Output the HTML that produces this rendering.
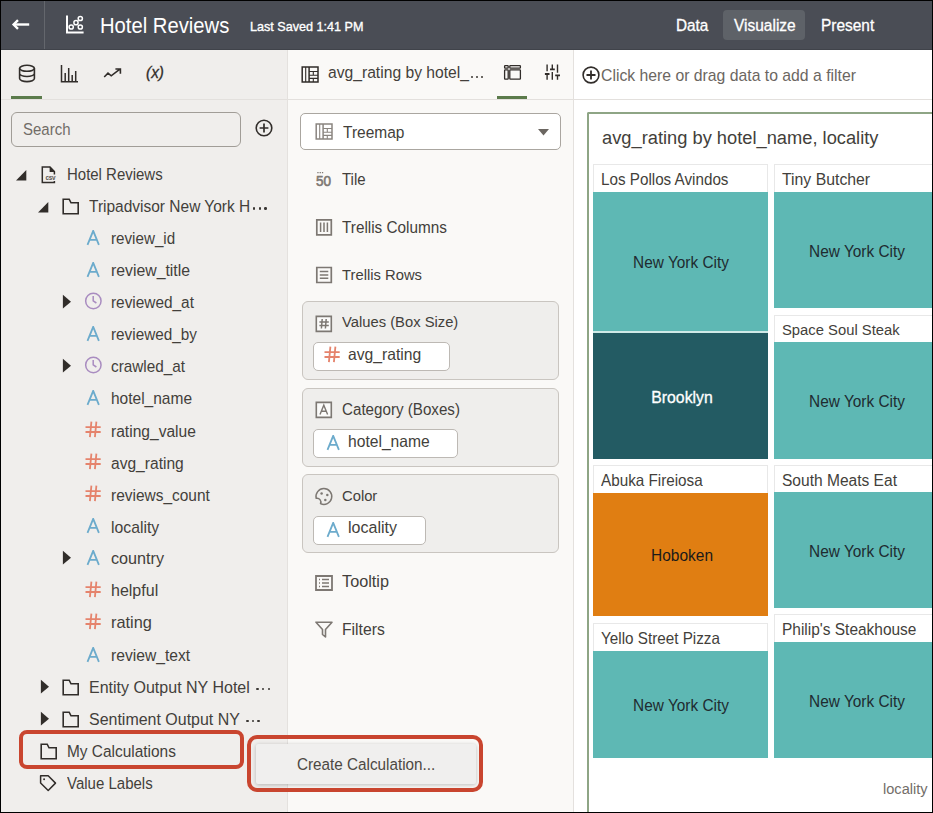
<!DOCTYPE html>
<html><head><meta charset="utf-8"><style>
html,body{margin:0;padding:0;width:933px;height:813px;overflow:hidden;background:#fff}
body{position:relative;font-family:"Liberation Sans",sans-serif}
.r{position:absolute;display:block}
.t{position:absolute;white-space:nowrap}
</style></head><body>
<div class="r" style="left:0px;top:0px;width:933px;height:813px;background:#fff"></div>
<div class="r" style="left:0px;top:0px;width:933px;height:50px;background:#4a4d55"></div>
<div class="r" style="left:0px;top:49px;width:933px;height:1px;background:#40434a"></div>
<div class="r" style="left:44px;top:1px;width:1px;height:48px;background:#64676d"></div>
<svg class="r" style="left:11px;top:18px" width="20" height="14" viewBox="0 0 20 14"><path d="M2.8 6.5 H18.2" stroke="#fff" stroke-width="2.4"/><path d="M7 2.2 L2.6 6.5 L7 10.8" stroke="#fff" stroke-width="2.4" fill="none"/></svg>
<svg class="r" style="left:64px;top:14px" width="21" height="21" viewBox="0 0 21 21"><path d="M3 1.5 V18.4 H19.6" stroke="#fff" stroke-width="2" fill="none"/><g stroke="#fff" stroke-width="1.5" fill="none"><circle cx="7.2" cy="13" r="2.1"/><circle cx="12" cy="8.7" r="2.1"/><circle cx="16.3" cy="4.5" r="2.1"/><circle cx="16.3" cy="13" r="2.1"/></g></svg>
<div class="t" style="left:99.7px;top:12.25px;font-size:21.5px;line-height:28px;color:#fff;font-weight:400;transform:scaleX(0.9410);transform-origin:0 0;">Hotel Reviews</div>
<div class="t" style="left:249.8px;top:17.96px;font-size:13.1px;line-height:17px;color:#fff;font-weight:400;-webkit-text-stroke:0.35px #fff;transform:scaleX(0.9615);transform-origin:0 0;">Last Saved 1:41 PM</div>
<div class="r" style="left:723px;top:10px;width:82px;height:30px;background:#5e6268;border-radius:4px"></div>
<div class="t" style="left:676px;top:14.97px;font-size:15.95px;line-height:21px;color:#fff;font-weight:400;-webkit-text-stroke:0.3px #fff;transform:scaleX(0.9615);transform-origin:0 0;">Data</div>
<div class="t" style="left:733.8px;top:14.91px;font-size:16.13px;line-height:21px;color:#fff;font-weight:400;-webkit-text-stroke:0.3px #fff;transform:scaleX(0.9615);transform-origin:0 0;">Visualize</div>
<div class="t" style="left:820.8px;top:14.94px;font-size:16.06px;line-height:21px;color:#fff;font-weight:400;-webkit-text-stroke:0.3px #fff;transform:scaleX(0.9615);transform-origin:0 0;">Present</div>
<div class="r" style="left:0px;top:50px;width:287px;height:763px;background:#f0eeec"></div>
<div class="r" style="left:287px;top:50px;width:1px;height:763px;background:#e4e1de"></div>
<div class="r" style="left:0px;top:99px;width:287px;height:1px;background:#e3e0dd"></div>
<div class="r" style="left:11px;top:96px;width:31px;height:3px;background:#5b7b4b"></div>
<svg class="r" style="left:18px;top:64px" width="18" height="19" viewBox="0 0 18 19"><g stroke="#312d2a" stroke-width="1.6" fill="none"><ellipse cx="9" cy="4.3" rx="7.4" ry="3"/><path d="M1.6 4.3 V14.6 A7.4 3 0 0 0 16.4 14.6 V4.3 M1.6 9.5 A7.4 3 0 0 0 16.4 9.5"/></g></svg>
<svg class="r" style="left:60px;top:65px" width="19" height="18" viewBox="0 0 19 18"><path d="M1.5 0 V16.8 H18 M5.2 16.5 V8 M8.7 16.5 V3 M12.2 16.5 V10 M15.7 16.5 V6" stroke="#312d2a" stroke-width="1.5" fill="none"/></svg>
<svg class="r" style="left:103px;top:66px" width="20" height="13" viewBox="0 0 20 13"><path d="M1.2 11 L5 7.2 L8.2 9.8 L16.6 3.4 M12.4 3 H17.4 V7.8" stroke="#312d2a" stroke-width="1.6" fill="none"/></svg>
<div class="t" style="left:145.5px;top:62.24px;font-size:16.06px;line-height:21px;color:#312d2a;font-weight:400;font-style:italic;-webkit-text-stroke:0.3px #312d2a;transform:scaleX(0.9615);transform-origin:0 0;">(x)</div>
<div class="r" style="left:11px;top:112px;width:230px;height:35px;box-sizing:border-box;border:1.3px solid #a19d97;border-radius:6px;background:#f0eeec"></div>
<div class="t" style="left:23.4px;top:120.10px;font-size:15.59px;line-height:20px;color:#716c67;font-weight:400;transform:scaleX(0.9615);transform-origin:0 0;">Search</div>
<svg class="r" style="left:255px;top:119px" width="18" height="18" viewBox="0 0 18 18"><circle cx="9" cy="9" r="7.8" stroke="#312d2a" stroke-width="1.6" fill="none"/><path d="M9 4.6 V13.4 M4.6 9 H13.4" stroke="#312d2a" stroke-width="1.7"/></svg>
<svg class="r" style="left:15.7px;top:168.9px" width="11" height="12" viewBox="0 0 11 12"><path d="M10.3 1 V11.4 H0 Z" fill="#312d2a"/></svg>
<svg class="r" style="left:40px;top:164.9px" width="18" height="19" viewBox="0 0 18 19"><path d="M14.4 9.5 V6.5 L10 2 H2.3 V17.5 H14.4 V16" stroke="#312d2a" stroke-width="1.5" fill="none"/><path d="M9.6 1.6 V6.9 H14.8 Z" fill="#312d2a"/><text x="5.6" y="14.8" font-size="6.4" font-weight="700" font-family="Liberation Sans" fill="#5a5550" letter-spacing="-0.3">csv</text></svg>
<div class="t" style="left:66.6px;top:164.50px;font-size:15.57px;line-height:20px;color:#433f3b;font-weight:400;transform:scaleX(0.9615);transform-origin:0 0;">Hotel Reviews</div>
<svg class="r" style="left:38px;top:200.99px" width="11" height="12" viewBox="0 0 11 12"><path d="M10.3 1 V11.4 H0 Z" fill="#312d2a"/></svg>
<svg class="r" style="left:62px;top:197.79000000000002px" width="18" height="17" viewBox="0 0 18 17"><path d="M1.2 1.2 H7.2 L9 4.8 H16.2 V15.7 H1.2 Z" stroke="#312d2a" stroke-width="1.6" fill="none" stroke-linejoin="miter"/></svg>
<div class="t" style="left:89.1px;top:195.91px;font-size:16.11px;line-height:21px;color:#433f3b;font-weight:400;transform:scaleX(0.9615);transform-origin:0 0;">Tripadvisor New York H</div>
<svg class="r" style="left:86px;top:229.58px" width="15" height="16" viewBox="0 0 15 16"><path d="M1.5 14.8 L7.2 0.8 L12.9 14.8 M3.8 9.9 H10.6" stroke="#6cabcc" stroke-width="1.8" fill="none"/></svg>
<div class="t" style="left:110.6px;top:228.10px;font-size:15.81px;line-height:21px;color:#433f3b;font-weight:400;transform:scaleX(0.9615);transform-origin:0 0;">review_id</div>
<svg class="r" style="left:86px;top:261.67px" width="15" height="16" viewBox="0 0 15 16"><path d="M1.5 14.8 L7.2 0.8 L12.9 14.8 M3.8 9.9 H10.6" stroke="#6cabcc" stroke-width="1.8" fill="none"/></svg>
<div class="t" style="left:110.6px;top:259.97px;font-size:16.46px;line-height:21px;color:#433f3b;font-weight:400;transform:scaleX(0.9615);transform-origin:0 0;">review_title</div>
<svg class="r" style="left:62px;top:293.76px" width="10" height="15" viewBox="0 0 10 15"><path d="M0.9 0.8 L9 7.65 L0.9 14.5 Z" fill="#312d2a"/></svg>
<svg class="r" style="left:84px;top:292.26px" width="19" height="19" viewBox="0 0 19 19"><circle cx="9.35" cy="9" r="7.7" stroke="#a98cc0" stroke-width="1.5" fill="none"/><path d="M9.2 3.9 V8.9 L12.4 11" stroke="#a98cc0" stroke-width="1.5" fill="none"/></svg>
<div class="t" style="left:110.6px;top:292.21px;font-size:16.01px;line-height:21px;color:#433f3b;font-weight:400;transform:scaleX(0.9615);transform-origin:0 0;">reviewed_at</div>
<svg class="r" style="left:86px;top:325.85px" width="15" height="16" viewBox="0 0 15 16"><path d="M1.5 14.8 L7.2 0.8 L12.9 14.8 M3.8 9.9 H10.6" stroke="#6cabcc" stroke-width="1.8" fill="none"/></svg>
<div class="t" style="left:110.6px;top:324.34px;font-size:15.91px;line-height:21px;color:#433f3b;font-weight:400;transform:scaleX(0.9615);transform-origin:0 0;">reviewed_by</div>
<svg class="r" style="left:62px;top:357.94000000000005px" width="10" height="15" viewBox="0 0 10 15"><path d="M0.9 0.8 L9 7.65 L0.9 14.5 Z" fill="#312d2a"/></svg>
<svg class="r" style="left:84px;top:356.44000000000005px" width="19" height="19" viewBox="0 0 19 19"><circle cx="9.35" cy="9" r="7.7" stroke="#a98cc0" stroke-width="1.5" fill="none"/><path d="M9.2 3.9 V8.9 L12.4 11" stroke="#a98cc0" stroke-width="1.5" fill="none"/></svg>
<div class="t" style="left:110.6px;top:356.42px;font-size:15.93px;line-height:21px;color:#433f3b;font-weight:400;transform:scaleX(0.9615);transform-origin:0 0;">crawled_at</div>
<svg class="r" style="left:86px;top:390.03000000000003px" width="15" height="16" viewBox="0 0 15 16"><path d="M1.5 14.8 L7.2 0.8 L12.9 14.8 M3.8 9.9 H10.6" stroke="#6cabcc" stroke-width="1.8" fill="none"/></svg>
<div class="t" style="left:110.6px;top:388.44px;font-size:16.14px;line-height:21px;color:#433f3b;font-weight:400;transform:scaleX(0.9615);transform-origin:0 0;">hotel_name</div>
<svg class="r" style="left:84px;top:419.62px" width="18" height="18" viewBox="0 0 18 18"><path d="M7.4 1.6 L5.9 17.1 M12.4 1.6 L10.9 17.1 M1.5 7.2 H16.7 M1.5 12 H16.7" stroke="#e5836c" stroke-width="1.8" fill="none"/></svg>
<div class="t" style="left:110.6px;top:420.50px;font-size:16.22px;line-height:21px;color:#433f3b;font-weight:400;transform:scaleX(0.9615);transform-origin:0 0;">rating_value</div>
<svg class="r" style="left:84px;top:451.71000000000004px" width="18" height="18" viewBox="0 0 18 18"><path d="M7.4 1.6 L5.9 17.1 M12.4 1.6 L10.9 17.1 M1.5 7.2 H16.7 M1.5 12 H16.7" stroke="#e5836c" stroke-width="1.8" fill="none"/></svg>
<div class="t" style="left:110.6px;top:452.59px;font-size:16.21px;line-height:21px;color:#433f3b;font-weight:400;transform:scaleX(0.9615);transform-origin:0 0;">avg_rating</div>
<svg class="r" style="left:84px;top:483.80000000000007px" width="18" height="18" viewBox="0 0 18 18"><path d="M7.4 1.6 L5.9 17.1 M12.4 1.6 L10.9 17.1 M1.5 7.2 H16.7 M1.5 12 H16.7" stroke="#e5836c" stroke-width="1.8" fill="none"/></svg>
<div class="t" style="left:110.6px;top:484.73px;font-size:16.08px;line-height:21px;color:#433f3b;font-weight:400;transform:scaleX(0.9615);transform-origin:0 0;">reviews_count</div>
<svg class="r" style="left:86px;top:518.39px" width="15" height="16" viewBox="0 0 15 16"><path d="M1.5 14.8 L7.2 0.8 L12.9 14.8 M3.8 9.9 H10.6" stroke="#6cabcc" stroke-width="1.8" fill="none"/></svg>
<div class="t" style="left:110.6px;top:516.71px;font-size:16.4px;line-height:21px;color:#433f3b;font-weight:400;transform:scaleX(0.9615);transform-origin:0 0;">locality</div>
<svg class="r" style="left:62px;top:550.48px" width="10" height="15" viewBox="0 0 10 15"><path d="M0.9 0.8 L9 7.65 L0.9 14.5 Z" fill="#312d2a"/></svg>
<svg class="r" style="left:86px;top:550.48px" width="15" height="16" viewBox="0 0 15 16"><path d="M1.5 14.8 L7.2 0.8 L12.9 14.8 M3.8 9.9 H10.6" stroke="#6cabcc" stroke-width="1.8" fill="none"/></svg>
<div class="t" style="left:110.6px;top:548.14px;font-size:16.84px;line-height:22px;color:#433f3b;font-weight:400;transform:scaleX(0.9615);transform-origin:0 0;">country</div>
<svg class="r" style="left:84px;top:580.07px" width="18" height="18" viewBox="0 0 18 18"><path d="M7.4 1.6 L5.9 17.1 M12.4 1.6 L10.9 17.1 M1.5 7.2 H16.7 M1.5 12 H16.7" stroke="#e5836c" stroke-width="1.8" fill="none"/></svg>
<div class="t" style="left:110.6px;top:580.30px;font-size:16.66px;line-height:22px;color:#433f3b;font-weight:400;transform:scaleX(0.9615);transform-origin:0 0;">helpful</div>
<svg class="r" style="left:84px;top:612.1600000000001px" width="18" height="18" viewBox="0 0 18 18"><path d="M7.4 1.6 L5.9 17.1 M12.4 1.6 L10.9 17.1 M1.5 7.2 H16.7 M1.5 12 H16.7" stroke="#e5836c" stroke-width="1.8" fill="none"/></svg>
<div class="t" style="left:110.6px;top:612.27px;font-size:17.0px;line-height:22px;color:#433f3b;font-weight:400;transform:scaleX(0.9615);transform-origin:0 0;">rating</div>
<svg class="r" style="left:86px;top:646.75px" width="15" height="16" viewBox="0 0 15 16"><path d="M1.5 14.8 L7.2 0.8 L12.9 14.8 M3.8 9.9 H10.6" stroke="#6cabcc" stroke-width="1.8" fill="none"/></svg>
<div class="t" style="left:110.6px;top:645.11px;font-size:16.27px;line-height:21px;color:#433f3b;font-weight:400;transform:scaleX(0.9615);transform-origin:0 0;">review_text</div>
<svg class="r" style="left:40px;top:678.84px" width="10" height="15" viewBox="0 0 10 15"><path d="M0.9 0.8 L9 7.65 L0.9 14.5 Z" fill="#312d2a"/></svg>
<svg class="r" style="left:62px;top:679.14px" width="18" height="17" viewBox="0 0 18 17"><path d="M1.2 1.2 H7.2 L9 4.8 H16.2 V15.7 H1.2 Z" stroke="#312d2a" stroke-width="1.6" fill="none" stroke-linejoin="miter"/></svg>
<div class="t" style="left:89.1px;top:676.56px;font-size:16.67px;line-height:22px;color:#433f3b;font-weight:400;transform:scaleX(0.9615);transform-origin:0 0;">Entity Output NY Hotel</div>
<svg class="r" style="left:40px;top:710.9300000000001px" width="10" height="15" viewBox="0 0 10 15"><path d="M0.9 0.8 L9 7.65 L0.9 14.5 Z" fill="#312d2a"/></svg>
<svg class="r" style="left:62px;top:711.23px" width="18" height="17" viewBox="0 0 18 17"><path d="M1.2 1.2 H7.2 L9 4.8 H16.2 V15.7 H1.2 Z" stroke="#312d2a" stroke-width="1.6" fill="none" stroke-linejoin="miter"/></svg>
<div class="t" style="left:89.1px;top:708.67px;font-size:16.61px;line-height:22px;color:#433f3b;font-weight:400;transform:scaleX(0.9615);transform-origin:0 0;">Sentiment Output NY</div>
<svg class="r" style="left:39.5px;top:743.32px" width="18" height="17" viewBox="0 0 18 17"><path d="M1.2 1.2 H7.2 L9 4.8 H16.2 V15.7 H1.2 Z" stroke="#312d2a" stroke-width="1.6" fill="none" stroke-linejoin="miter"/></svg>
<div class="t" style="left:66.6px;top:741.46px;font-size:16.06px;line-height:21px;color:#433f3b;font-weight:400;transform:scaleX(0.9615);transform-origin:0 0;">My Calculations</div>
<svg class="r" style="left:39px;top:773.61px" width="18" height="18" viewBox="0 0 18 18"><path d="M1.6 1.8 H9.2 L16.5 9.1 L9.2 16.5 L1.6 9 Z" stroke="#312d2a" stroke-width="1.5" fill="none" stroke-linejoin="round"/><circle cx="5.1" cy="5.3" r="0.95" fill="#312d2a"/></svg>
<div class="t" style="left:66.6px;top:774.20px;font-size:15.61px;line-height:20px;color:#433f3b;font-weight:400;transform:scaleX(0.9615);transform-origin:0 0;">Value Labels</div>
<div class="r" style="left:253.0px;top:207.22px;width:2.4px;height:2.4px;background:#3a3633;border-radius:50%"></div>
<div class="r" style="left:258.6px;top:207.22px;width:2.4px;height:2.4px;background:#3a3633;border-radius:50%"></div>
<div class="r" style="left:264.2px;top:207.22px;width:2.4px;height:2.4px;background:#3a3633;border-radius:50%"></div>
<div class="r" style="left:256.4px;top:687.52px;width:2.4px;height:2.4px;background:#3a3633;border-radius:50%"></div>
<div class="r" style="left:262.0px;top:687.52px;width:2.4px;height:2.4px;background:#3a3633;border-radius:50%"></div>
<div class="r" style="left:267.6px;top:687.52px;width:2.4px;height:2.4px;background:#3a3633;border-radius:50%"></div>
<div class="r" style="left:246.2px;top:719.54px;width:2.4px;height:2.4px;background:#3a3633;border-radius:50%"></div>
<div class="r" style="left:251.8px;top:719.54px;width:2.4px;height:2.4px;background:#3a3633;border-radius:50%"></div>
<div class="r" style="left:257.4px;top:719.54px;width:2.4px;height:2.4px;background:#3a3633;border-radius:50%"></div>
<div class="r" style="left:288px;top:50px;width:285px;height:763px;background:#faf9f7"></div>
<div class="r" style="left:573px;top:50px;width:1px;height:763px;background:#e4e1de"></div>
<div class="r" style="left:288px;top:99px;width:285px;height:1px;background:#e3e0dd"></div>
<div class="r" style="left:497px;top:96px;width:30px;height:3px;background:#5b7b4b"></div>
<svg class="r" style="left:301px;top:66px" width="18" height="17" viewBox="0 0 18 17"><path d="M1.2 1.1 H17 V16 H1.2 Z M8.1 1 V16" stroke="#312d2a" stroke-width="1.5" fill="none"/><path d="M4.7 1 V16 M8.1 5.5 H17 M8.1 9.2 H17 M8.1 12.4 H17 M12.3 5.5 V9.2 M12.3 12.4 V16" stroke="#312d2a" stroke-width="1.1" fill="none"/></svg>
<div class="t" style="left:328.2px;top:62.36px;font-size:16.29px;line-height:21px;color:#433f3b;font-weight:400;transform:scaleX(0.9615);transform-origin:0 0;">avg_rating by hotel_</div>
<div class="r" style="left:471.0px;top:75.75px;width:1.9px;height:1.9px;background:#3d3935;border-radius:50%"></div>
<div class="r" style="left:476.2px;top:75.75px;width:1.9px;height:1.9px;background:#3d3935;border-radius:50%"></div>
<div class="r" style="left:481.4px;top:75.75px;width:1.9px;height:1.9px;background:#3d3935;border-radius:50%"></div>
<svg class="r" style="left:503px;top:64px" width="19" height="17" viewBox="0 0 19 17"><g stroke="#312d2a" stroke-width="1.3" fill="none"><rect x="1.6" y="1.6" width="3.6" height="2.6" rx="0.6"/><rect x="6.8" y="1.6" width="10.6" height="2.6" rx="0.6"/><rect x="1.6" y="5.8" width="3.6" height="9.4" rx="0.6"/><rect x="6.8" y="5.8" width="10.6" height="9.4" rx="0.6"/></g></svg>
<svg class="r" style="left:544px;top:64px" width="18" height="17" viewBox="0 0 18 17"><path d="M3.1 0.6 V7.3 M3.1 10 V15.7 M8.3 0.6 V5.4 M8.3 8 V15.7 M13.5 0.6 V8.8 M13.5 11.4 V15.7" stroke="#312d2a" stroke-width="1.4"/><path d="M0.9 10 H5.5 M6 5.4 H10.8 M11.2 11.4 H16" stroke="#312d2a" stroke-width="1.8"/></svg>
<div class="r" style="left:300px;top:113px;width:261px;height:37px;box-sizing:border-box;border:1px solid #aaa6a0;border-radius:5px;background:#fff"></div>
<svg class="r" style="left:314.5px;top:123px" width="18" height="17" viewBox="0 0 18 17"><path d="M1.2 1.1 H17 V16 H1.2 Z M8.1 1 V16" stroke="#8a8580" stroke-width="1.5" fill="none"/><path d="M4.7 1 V16 M8.1 5.5 H17 M8.1 9.2 H17 M8.1 12.4 H17 M12.3 5.5 V9.2 M12.3 12.4 V16" stroke="#8a8580" stroke-width="1.1" fill="none"/></svg>
<div class="t" style="left:343.4px;top:122.01px;font-size:16.13px;line-height:21px;color:#433f3b;font-weight:400;transform:scaleX(0.9615);transform-origin:0 0;">Treemap</div>
<svg class="r" style="left:538px;top:129px" width="11" height="7" viewBox="0 0 11 7"><path d="M0 0 H11 L5.5 6.5 Z" fill="#6b6661"/></svg>
<svg class="r" style="left:315px;top:171px" width="18" height="16" viewBox="0 0 18 16"><text x="1" y="14.8" font-size="14.5" font-weight="400" font-family="Liberation Sans" fill="#7d7873" stroke="#7d7873" stroke-width="0.6" textLength="15" lengthAdjust="spacingAndGlyphs">50</text><path d="M2.3 1.6 H9" stroke="#7d7873" stroke-width="1.2" stroke-dasharray="1.3 1"/></svg>
<div class="t" style="left:342px;top:170.20px;font-size:15.59px;line-height:20px;color:#433f3b;font-weight:400;transform:scaleX(0.9615);transform-origin:0 0;">Tile</div>
<svg class="r" style="left:315px;top:218px" width="18" height="18" viewBox="0 0 18 18"><path d="M1.8 1.8 H16.3 V16.8 H1.8 Z" stroke="#7d7873" stroke-width="1.7" fill="none"/><path d="M5.6 4.6 V14 M9 4.6 V14 M12.4 4.6 V14" stroke="#7d7873" stroke-width="1.5"/></svg>
<div class="t" style="left:342px;top:216.78px;font-size:15.93px;line-height:21px;color:#433f3b;font-weight:400;transform:scaleX(0.9615);transform-origin:0 0;">Trellis Columns</div>
<svg class="r" style="left:315px;top:266px" width="18" height="18" viewBox="0 0 18 18"><path d="M1.8 1.5 H16.3 V16.5 H1.8 Z" stroke="#7d7873" stroke-width="1.7" fill="none"/><path d="M4.8 5.5 H13.3 M4.8 8.9 H13.3 M4.8 12.3 H13.3" stroke="#7d7873" stroke-width="1.5"/></svg>
<div class="t" style="left:342px;top:264.87px;font-size:15.38px;line-height:20px;color:#433f3b;font-weight:400;transform:scaleX(0.9615);transform-origin:0 0;">Trellis Rows</div>
<div class="r" style="left:302px;top:301px;width:257px;height:79px;box-sizing:border-box;border:1px solid #c9c5c0;border-radius:6px;background:#efeeec"></div>
<svg class="r" style="left:315px;top:315px" width="18" height="18" viewBox="0 0 18 18"><path d="M1.3 1.4 H16.3 V16.4 H1.3 Z" stroke="#7d7873" stroke-width="1.6" fill="#fbfbfa"/><path d="M7.2 4 L6.4 13.5 M11.2 4 L10.4 13.5 M4.4 7 H13.8 M4.4 10.4 H13.8" stroke="#7d7873" stroke-width="1.5"/></svg>
<div class="t" style="left:342px;top:312.48px;font-size:15.36px;line-height:20px;color:#433f3b;font-weight:400;transform:scaleX(0.9615);transform-origin:0 0;">Values (Box Size)</div>
<div class="r" style="left:313px;top:342px;width:137px;height:29px;box-sizing:border-box;border:1px solid #bdb9b4;border-radius:5px;background:#fff"></div>
<svg class="r" style="left:323px;top:344.5px" width="18" height="18" viewBox="0 0 18 18"><path d="M7.4 1.6 L5.9 17.1 M12.4 1.6 L10.9 17.1 M1.5 7.2 H16.7 M1.5 12 H16.7" stroke="#e5836c" stroke-width="1.8" fill="none"/></svg>
<div class="t" style="left:347.8px;top:344.05px;font-size:16.31px;line-height:21px;color:#433f3b;font-weight:400;transform:scaleX(0.9615);transform-origin:0 0;">avg_rating</div>
<div class="r" style="left:302px;top:388px;width:257px;height:79px;box-sizing:border-box;border:1px solid #c9c5c0;border-radius:6px;background:#efeeec"></div>
<svg class="r" style="left:315px;top:401px" width="18" height="18" viewBox="0 0 18 18"><path d="M1.3 1.4 H16.3 V16.4 H1.3 Z" stroke="#7d7873" stroke-width="1.6" fill="#fbfbfa"/><path d="M5 13.5 L8.8 4.2 L12.6 13.5 M6.3 10.3 H11.3" stroke="#7d7873" stroke-width="1.4" fill="none"/></svg>
<div class="t" style="left:342px;top:398.83px;font-size:15.78px;line-height:21px;color:#433f3b;font-weight:400;transform:scaleX(0.9615);transform-origin:0 0;">Category (Boxes)</div>
<div class="r" style="left:313px;top:429px;width:145px;height:29px;box-sizing:border-box;border:1px solid #bdb9b4;border-radius:5px;background:#fff"></div>
<svg class="r" style="left:325.5px;top:434.8px" width="15" height="16" viewBox="0 0 15 16"><path d="M1.5 14.8 L7.2 0.8 L12.9 14.8 M3.8 9.9 H10.6" stroke="#6cabcc" stroke-width="1.8" fill="none"/></svg>
<div class="t" style="left:347.8px;top:431.06px;font-size:16.28px;line-height:21px;color:#433f3b;font-weight:400;transform:scaleX(0.9615);transform-origin:0 0;">hotel_name</div>
<div class="r" style="left:302px;top:474px;width:257px;height:79px;box-sizing:border-box;border:1px solid #c9c5c0;border-radius:6px;background:#efeeec"></div>
<svg class="r" style="left:314px;top:487px" width="20" height="20" viewBox="0 0 20 20"><path d="M2.2 11.3 A7.9 7.9 0 1 1 6.5 16.6 A3.8 3.8 0 0 0 2.2 11.3 Z" stroke="#7d7873" stroke-width="1.5" fill="none" stroke-linejoin="round"/><g fill="#7d7873"><circle cx="7.6" cy="6.5" r="1.25"/><circle cx="13.3" cy="8" r="1.25"/><circle cx="11.3" cy="13" r="1.25"/></g></svg>
<div class="t" style="left:342px;top:486.48px;font-size:15.36px;line-height:20px;color:#433f3b;font-weight:400;transform:scaleX(0.9615);transform-origin:0 0;">Color</div>
<div class="r" style="left:313px;top:516px;width:113px;height:29px;box-sizing:border-box;border:1px solid #bdb9b4;border-radius:5px;background:#fff"></div>
<svg class="r" style="left:325.5px;top:521.8px" width="15" height="16" viewBox="0 0 15 16"><path d="M1.5 14.8 L7.2 0.8 L12.9 14.8 M3.8 9.9 H10.6" stroke="#6cabcc" stroke-width="1.8" fill="none"/></svg>
<div class="t" style="left:347.8px;top:517.42px;font-size:16.67px;line-height:22px;color:#433f3b;font-weight:400;transform:scaleX(0.9615);transform-origin:0 0;">locality</div>
<svg class="r" style="left:315px;top:575px" width="18" height="16" viewBox="0 0 18 16"><path d="M1 1 H17 V15 H1 Z" stroke="#7d7873" stroke-width="1.8" fill="none"/><path d="M7 4.5 H14 M7 8 H14 M7 11.5 H14 M4 4.5 H5 M4 8 H5 M4 11.5 H5" stroke="#7d7873" stroke-width="1.5"/></svg>
<div class="t" style="left:342px;top:571.34px;font-size:16.91px;line-height:22px;color:#433f3b;font-weight:400;transform:scaleX(0.9615);transform-origin:0 0;">Tooltip</div>
<svg class="r" style="left:315px;top:621px" width="18" height="17" viewBox="0 0 18 17"><path d="M1 1.2 H17 L10.5 8.5 V16 L7.5 13.5 V8.5 Z" stroke="#7d7873" stroke-width="1.6" fill="none" stroke-linejoin="round"/></svg>
<div class="t" style="left:342px;top:619.43px;font-size:16.35px;line-height:21px;color:#433f3b;font-weight:400;transform:scaleX(0.9615);transform-origin:0 0;">Filters</div>
<div class="r" style="left:574px;top:50px;width:359px;height:763px;background:#fff"></div>
<div class="r" style="left:574px;top:99px;width:359px;height:1px;background:#e3e0dd"></div>
<svg class="r" style="left:582px;top:66px" width="18" height="18" viewBox="0 0 18 18"><circle cx="9" cy="9" r="7.9" stroke="#312d2a" stroke-width="1.6" fill="none"/><path d="M9 4.5 V13.5 M4.5 9 H13.5" stroke="#312d2a" stroke-width="1.8"/></svg>
<div class="t" style="left:601.4px;top:64.82px;font-size:16.4px;line-height:21px;color:#6b6661;font-weight:400;transform:scaleX(0.9615);transform-origin:0 0;">Click here or drag data to add a filter</div>
<div class="r" style="left:587px;top:112px;width:346px;height:701px;box-sizing:border-box;border-left:2px solid #8ea585;border-top:2px solid #8ea585;border-top-left-radius:2px"></div>
<div class="t" style="left:601.5px;top:125.11px;font-size:19.02px;line-height:25px;color:#433f3b;font-weight:400;transform:scaleX(0.9615);transform-origin:0 0;">avg_rating by hotel_name, locality</div>
<div class="r" style="left:593px;top:164px;width:175px;height:28px;box-sizing:border-box;border:1px solid #e8e8e8;border-bottom:none;background:#fff"></div>
<div class="t" style="left:600.8px;top:168.81px;font-size:15.84px;line-height:21px;color:#433f3b;font-weight:400;transform:scaleX(0.9615);transform-origin:0 0;">Los Pollos Avindos</div>
<div class="r" style="left:593px;top:192px;width:175px;height:139px;background:#5eb8b4"></div>
<div class="r" style="left:593px;top:331px;width:175px;height:2px;background:#cfeae8"></div>
<div class="r" style="left:593px;top:333px;width:175px;height:126px;background:#235b63"></div>
<div class="r" style="left:774px;top:164px;width:170px;height:28px;box-sizing:border-box;border:1px solid #e8e8e8;border-bottom:none;background:#fff"></div>
<div class="t" style="left:781.8px;top:168.60px;font-size:16.45px;line-height:21px;color:#433f3b;font-weight:400;transform:scaleX(0.9615);transform-origin:0 0;">Tiny Butcher</div>
<div class="r" style="left:774px;top:192px;width:170px;height:116px;background:#5eb8b4"></div>
<div class="r" style="left:774px;top:315px;width:170px;height:27px;box-sizing:border-box;border:1px solid #e8e8e8;border-bottom:none;background:#fff"></div>
<div class="t" style="left:781.8px;top:320.46px;font-size:15.4px;line-height:20px;color:#433f3b;font-weight:400;transform:scaleX(0.9615);transform-origin:0 0;">Space Soul Steak</div>
<div class="r" style="left:774px;top:342px;width:170px;height:117px;background:#5eb8b4"></div>
<div class="r" style="left:593px;top:465px;width:175px;height:28px;box-sizing:border-box;border:1px solid #e8e8e8;border-bottom:none;background:#fff"></div>
<div class="t" style="left:600.8px;top:469.80px;font-size:15.86px;line-height:21px;color:#433f3b;font-weight:400;transform:scaleX(0.9615);transform-origin:0 0;">Abuka Fireiosa</div>
<div class="r" style="left:593px;top:493px;width:175px;height:123px;background:#e07e12"></div>
<div class="r" style="left:774px;top:465px;width:170px;height:27px;box-sizing:border-box;border:1px solid #e8e8e8;border-bottom:none;background:#fff"></div>
<div class="t" style="left:781.8px;top:469.69px;font-size:16.18px;line-height:21px;color:#433f3b;font-weight:400;transform:scaleX(0.9615);transform-origin:0 0;">South Meats Eat</div>
<div class="r" style="left:774px;top:492px;width:170px;height:116px;background:#5eb8b4"></div>
<div class="r" style="left:593px;top:623px;width:175px;height:28px;box-sizing:border-box;border:1px solid #e8e8e8;border-bottom:none;background:#fff"></div>
<div class="t" style="left:600.8px;top:627.80px;font-size:15.87px;line-height:21px;color:#433f3b;font-weight:400;transform:scaleX(0.9615);transform-origin:0 0;">Yello Street Pizza</div>
<div class="r" style="left:593px;top:651px;width:175px;height:107px;background:#5eb8b4"></div>
<div class="r" style="left:774px;top:614px;width:170px;height:28px;box-sizing:border-box;border:1px solid #e8e8e8;border-bottom:none;background:#fff"></div>
<div class="t" style="left:781.8px;top:618.73px;font-size:16.08px;line-height:21px;color:#433f3b;font-weight:400;transform:scaleX(0.9615);transform-origin:0 0;">Philip's Steakhouse</div>
<div class="r" style="left:774px;top:642px;width:170px;height:116px;background:#5eb8b4"></div>
<div class="t" style="left:581.4px;width:200px;text-align:center;top:252.25px;font-size:16.01px;line-height:21px;color:#1f2b30;font-weight:400;transform:scaleX(0.9615);transform-origin:50% 0;">New York City</div>
<div class="t" style="left:581.7px;width:200px;text-align:center;top:386.80px;font-size:16.46px;line-height:21px;color:#fff;font-weight:400;-webkit-text-stroke:0.3px #fff;transform:scaleX(0.9615);transform-origin:50% 0;">Brooklyn</div>
<div class="t" style="left:581.6px;width:200px;text-align:center;top:545.42px;font-size:16.11px;line-height:21px;color:#1a1a1a;font-weight:400;transform:scaleX(0.9615);transform-origin:50% 0;">Hoboken</div>
<div class="t" style="left:581.4px;width:200px;text-align:center;top:694.95px;font-size:16.01px;line-height:21px;color:#1f2b30;font-weight:400;transform:scaleX(0.9615);transform-origin:50% 0;">New York City</div>
<div class="t" style="left:757.4px;width:200px;text-align:center;top:240.95px;font-size:16.01px;line-height:21px;color:#1f2b30;font-weight:400;transform:scaleX(0.9615);transform-origin:50% 0;">New York City</div>
<div class="t" style="left:757.4px;width:200px;text-align:center;top:391.45px;font-size:16.01px;line-height:21px;color:#1f2b30;font-weight:400;transform:scaleX(0.9615);transform-origin:50% 0;">New York City</div>
<div class="t" style="left:757.4px;width:200px;text-align:center;top:540.95px;font-size:16.01px;line-height:21px;color:#1f2b30;font-weight:400;transform:scaleX(0.9615);transform-origin:50% 0;">New York City</div>
<div class="t" style="left:757.4px;width:200px;text-align:center;top:691.45px;font-size:16.01px;line-height:21px;color:#1f2b30;font-weight:400;transform:scaleX(0.9615);transform-origin:50% 0;">New York City</div>
<div class="t" style="left:882.6px;top:778.74px;font-size:15.17px;line-height:20px;color:#736e69;font-weight:400;transform:scaleX(0.9615);transform-origin:0 0;">locality</div>
<div class="r" style="left:256px;top:744px;width:220px;height:40px;background:#f0efee;box-shadow:0 1px 4px rgba(0,0,0,0.25);border-radius:2px"></div>
<div class="t" style="left:296.5px;top:754.40px;font-size:15.88px;line-height:21px;color:#4d4843;font-weight:400;transform:scaleX(0.9615);transform-origin:0 0;">Create Calculation...</div>
<div class="r" style="left:19px;top:730px;width:225px;height:39px;box-sizing:border-box;border:4px solid #c9452f;border-radius:8px"></div>
<div class="r" style="left:247px;top:735px;width:236px;height:57px;box-sizing:border-box;border:4px solid #c9452f;border-radius:10px"></div>
<div class="r" style="left:0px;top:0px;width:933px;height:1px;background:#000"></div>
<div class="r" style="left:0px;top:812px;width:933px;height:1px;background:#000"></div>
<div class="r" style="left:0px;top:0px;width:1px;height:813px;background:#000"></div>
<div class="r" style="left:932px;top:0px;width:1px;height:813px;background:#000"></div>
</body></html>
